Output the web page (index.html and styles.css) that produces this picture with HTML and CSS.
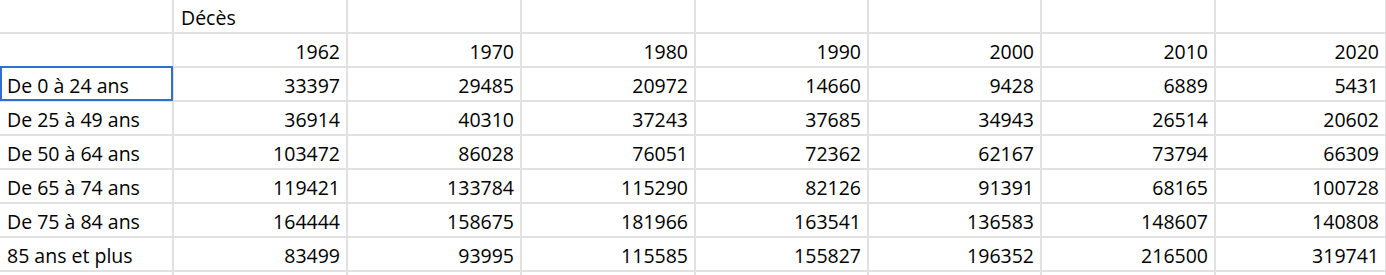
FILE: index.html
```html
<!DOCTYPE html>
<html lang="fr">
<head>
<meta charset="utf-8">
<title>Décès</title>
<link rel="stylesheet" href="styles.css">
</head>
<body>
<div class="viewport">
<div class="sheet">
  <div class="cell"></div><div class="cell txt">Décès</div><div class="cell"></div><div class="cell"></div><div class="cell"></div><div class="cell"></div><div class="cell"></div><div class="cell"></div>
  <div class="cell"></div><div class="cell num">1962</div><div class="cell num">1970</div><div class="cell num">1980</div><div class="cell num">1990</div><div class="cell num">2000</div><div class="cell num">2010</div><div class="cell num">2020</div>
  <div class="cell txt selected">De 0 à 24 ans</div><div class="cell num">33397</div><div class="cell num">29485</div><div class="cell num">20972</div><div class="cell num">14660</div><div class="cell num">9428</div><div class="cell num">6889</div><div class="cell num">5431</div>
  <div class="cell txt">De 25 à 49 ans</div><div class="cell num">36914</div><div class="cell num">40310</div><div class="cell num">37243</div><div class="cell num">37685</div><div class="cell num">34943</div><div class="cell num">26514</div><div class="cell num">20602</div>
  <div class="cell txt">De 50 à 64 ans</div><div class="cell num">103472</div><div class="cell num">86028</div><div class="cell num">76051</div><div class="cell num">72362</div><div class="cell num">62167</div><div class="cell num">73794</div><div class="cell num">66309</div>
  <div class="cell txt">De 65 à 74 ans</div><div class="cell num">119421</div><div class="cell num">133784</div><div class="cell num">115290</div><div class="cell num">82126</div><div class="cell num">91391</div><div class="cell num">68165</div><div class="cell num">100728</div>
  <div class="cell txt">De 75 à 84 ans</div><div class="cell num">164444</div><div class="cell num">158675</div><div class="cell num">181966</div><div class="cell num">163541</div><div class="cell num">136583</div><div class="cell num">148607</div><div class="cell num">140808</div>
  <div class="cell txt">85 ans et plus</div><div class="cell num">83499</div><div class="cell num">93995</div><div class="cell num">115585</div><div class="cell num">155827</div><div class="cell num">196352</div><div class="cell num">216500</div><div class="cell num">319741</div>
  <div class="cell"></div><div class="cell"></div><div class="cell"></div><div class="cell"></div><div class="cell"></div><div class="cell"></div><div class="cell"></div><div class="cell"></div>
</div>
</div>
</body>
</html>
```
FILE: styles.css
```css
html, body {
  margin: 0;
  padding: 0;
  background: #ffffff;
}

body {
  font-family: "Open Sans", "Noto Sans", sans-serif;
  font-size: 19.5px;
  color: #000000;
}

.viewport {
  width: 1386px;
  height: 275px;
  overflow: hidden;
}

.sheet {
  display: grid;
  grid-template-columns: 174px 174px 174px 174px 173px 173px 174px 171px;
  grid-auto-rows: 34px;
  width: 1387px;
}

.cell {
  box-sizing: border-box;
  border-right: 2px solid #e1e1e1;
  border-bottom: 2px solid #e1e1e1;
  display: flex;
  align-items: flex-end;
  padding: 0 6px 1px 7px;
  line-height: 26px;
  white-space: nowrap;
  overflow: hidden;
}

.num {
  justify-content: flex-end;
}

.txt {
  justify-content: flex-start;
}

.selected {
  position: relative;
  overflow: visible;
}

.selected::after {
  content: "";
  position: absolute;
  top: -2px;
  left: 0;
  right: -1px;
  bottom: -1px;
  border: 2px solid #2f6fd3;
  pointer-events: none;
}
```
